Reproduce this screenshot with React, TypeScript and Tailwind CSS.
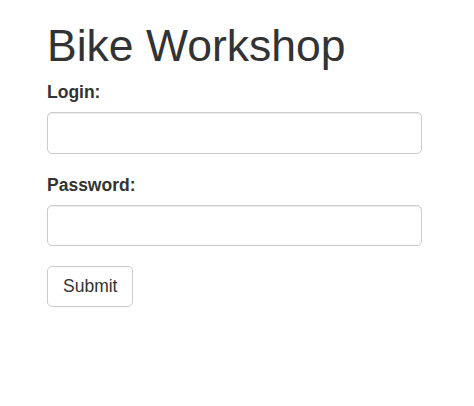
import { useState } from "react"

export default function App() {
  const [login, setLogin] = useState("")
  const [password, setPassword] = useState("")

  return (
    <div className="min-h-[406px] w-full bg-white font-['Liberation_Sans',Arial,sans-serif] text-[#333]">
      <form
        className="flex w-[422px] flex-col pl-[47px]"
        onSubmit={(e) => e.preventDefault()}
      >
        <h1 className="mt-[21px] text-[44.5px] leading-[49.5px] font-normal">Bike Workshop</h1>

        {/* Login */}
        <label htmlFor="login" className="mt-[9px] text-[17.5px] leading-[25px] font-bold">
          Login:
        </label>
        <input
          id="login"
          type="text"
          value={login}
          onChange={(e) => setLogin(e.target.value)}
          className="mt-[7.5px] h-[42px] w-full rounded-[5px] border border-[#ccc] bg-white px-[15px] text-[17.5px] shadow-[inset_0_1px_1px_rgba(0,0,0,0.075)] outline-none"
        />

        {/* Password */}
        <label htmlFor="password" className="mt-[18.5px] text-[17.5px] leading-[25px] font-bold">
          Password:
        </label>
        <input
          id="password"
          type="password"
          value={password}
          onChange={(e) => setPassword(e.target.value)}
          className="mt-[7px] h-[41.5px] w-full rounded-[5px] border border-[#ccc] bg-white px-[15px] text-[17.5px] shadow-[inset_0_1px_1px_rgba(0,0,0,0.075)] outline-none"
        />

        <div className="mt-[19.5px]">
          <button
            type="submit"
            className="h-[41px] rounded-[5px] border border-[#ccc] bg-white px-[15px] text-[17.5px] leading-[25px] text-[#333]"
          >
            Submit
          </button>
        </div>
      </form>
    </div>
  )
}
